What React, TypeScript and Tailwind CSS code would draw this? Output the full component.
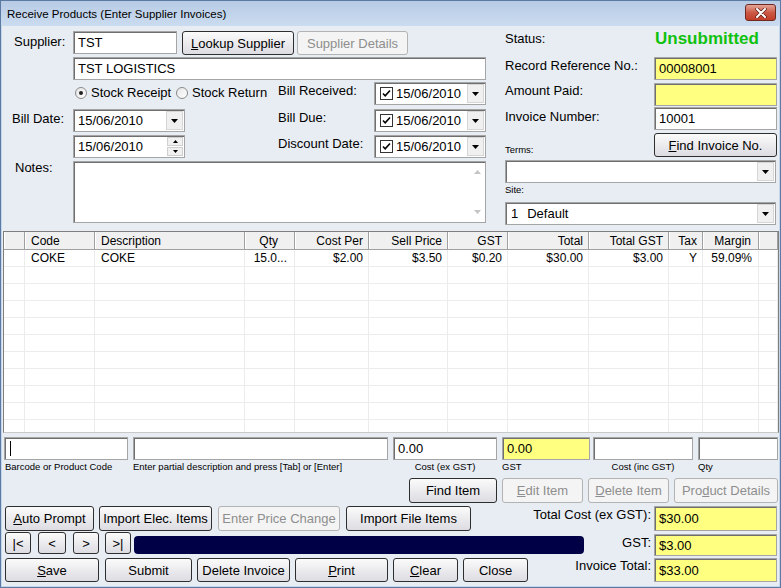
import React from 'react'

const sunken = 'border border-[#a5a5a5] shadow-[inset_1px_1px_0_#6f6f6f]'

function Field({ w, h = 'h-[23px]', yellow, children, className = '' }: { w: string; h?: string; yellow?: boolean; children?: React.ReactNode; className?: string }) {
    return (
        <div className={`${w} ${h} shrink-0 ${sunken} ${yellow ? 'bg-[#ffff80]' : 'bg-white'} flex items-center pl-[4px] text-[13px] leading-[15px] text-black whitespace-nowrap overflow-hidden ${className}`}>
            {children}
        </div>
    )
}

function Btn({ w, h = 'h-[24px]', disabled, children }: { w: string; h?: string; disabled?: boolean; children: React.ReactNode }) {
    return (
        <div
            className={`${w} ${h} shrink-0 flex items-center justify-center rounded-[3px] border text-[13px] leading-[15px] whitespace-nowrap ${
                disabled
                    ? 'border-[#b3b3b3] text-[#8e8e8e] bg-[#f4f4f4]'
                    : 'border-[#2e2e2e] text-black bg-gradient-to-b from-[#fbfbfb] to-[#dcdce2]'
            }`}
        >
            {children}
        </div>
    )
}

function Arrow({ up, color = '#000' }: { up?: boolean; color?: string }) {
    return (
        <svg width="7" height="4" viewBox="0 0 7 4">
            <path d={up ? 'M0 4h7L3.5 0z' : 'M0 0h7L3.5 4z'} fill={color} />
        </svg>
    )
}

function DropBtn() {
    return (
        <div className="ml-auto mr-[1px] w-[17px] h-[19px] shrink-0 bg-[#f0f0f0] border border-[#d6d6d6] flex items-center justify-center">
            <Arrow />
        </div>
    )
}

function Check() {
    return (
        <div className="w-[13px] h-[13px] shrink-0 border border-[#333] bg-white flex items-center justify-center">
            <svg width="9" height="9" viewBox="0 0 9 9">
                <path d="M1 4.5l2.2 2.3L8 1.5" stroke="#000" strokeWidth="1.6" fill="none" />
            </svg>
        </div>
    )
}

function DatePick() {
    return (
        <Field w="w-[112px]" className="pl-[5px]">
            <Check />
            <span className="ml-[3px]">15/06/2010</span>
            <DropBtn />
        </Field>
    )
}

function Radio({ on }: { on?: boolean }) {
    return (
        <div className="w-[12px] h-[12px] rounded-full border border-[#8a8a8a] bg-gradient-to-br from-[#e6e6e6] to-white flex items-center justify-center shrink-0">
            {on && <div className="w-[4px] h-[4px] rounded-full bg-[#222]" />}
        </div>
    )
}

const cols = 'grid grid-cols-[21px_70px_150px_50px_74px_79px_60px_81px_80px_34px_56px_1fr]'

const headers: [string, string][] = [
    ['', ''],
    ['Code', 'text-left pl-[6px]'],
    ['Description', 'text-left pl-[6px]'],
    ['Qty', 'text-right pr-[16px]'],
    ['Cost Per', 'text-right pr-[5px]'],
    ['Sell Price', 'text-right pr-[5px]'],
    ['GST', 'text-right pr-[5px]'],
    ['Total', 'text-right pr-[5px]'],
    ['Total GST', 'text-right pr-[5px]'],
    ['Tax', 'text-right pr-[5px]'],
    ['Margin', 'text-right pr-[7px]'],
    ['', ''],
]

const row = ['', 'COKE', 'COKE', '15.0...', '$2.00', '$3.50', '$0.20', '$30.00', '$3.00', 'Y', '59.09%', '']

export default function App() {
    return (
        <div className="w-[781px] h-[588px] border border-[#5b7aa3] bg-[#c4d6ec] flex flex-col font-['Liberation_Sans',Arial,sans-serif] text-black overflow-hidden">
            {/* Title bar */}
            <div className="h-[25px] shrink-0 flex items-center bg-gradient-to-b from-[#b7cbe5] to-[#cbdcf0] pl-[6px] pr-[4px]">
                <span className="text-[11.5px] leading-[14px]">Receive Products (Enter Supplier Invoices)</span>
                <div className="ml-auto -mt-[2px] w-[31px] h-[17px] rounded-[3px] border border-[#6e2a20] bg-gradient-to-b from-[#e3a497] via-[#cc5a46] to-[#c23d27] flex items-center justify-center">
                    <svg width="12" height="10" viewBox="0 0 12 10">
                        <path d="M2 1l8 8M10 1l-8 8" stroke="#5a1a12" strokeWidth="3.4" strokeLinecap="round" />
                        <path d="M2 1l8 8M10 1l-8 8" stroke="#fff" strokeWidth="2" strokeLinecap="round" />
                    </svg>
                </div>
            </div>

            {/* Body */}
            <div className="mx-[1px] h-[560px] bg-[#e8edf3] flex flex-col">
                {/* Top section */}
                <div className="pt-[5px] flex">
                    {/* Left column */}
                    <div className="ml-[2px] w-[482px] flex flex-col text-[13px] leading-[15px]">
                        <div className="flex h-[24px]">
                            <div className="w-[69px] pl-[10px] pt-[3px]">Supplier:</div>
                            <Field w="w-[104px]">TST</Field>
                            <div className="ml-[5px]">
                                <Btn w="w-[112px]"><span><u>L</u>ookup Supplier</span></Btn>
                            </div>
                            <div className="ml-[3px]">
                                <Btn w="w-[111px]" disabled>Supplier Details</Btn>
                            </div>
                        </div>
                        <div className="flex mt-[2px]">
                            <div className="w-[69px]" />
                            <Field w="w-[413px]">TST LOGISTICS</Field>
                        </div>
                        <div className="flex mt-[2px] h-[23px]">
                            <div className="w-[69px]" />
                            <div className="w-[205px] flex items-center pl-[2px] -mt-[2px]">
                                <div className="w-[101px] flex items-center gap-[4px]">
                                    <Radio on />
                                    <span>Stock Receipt</span>
                                </div>
                                <div className="flex items-center gap-[4px]">
                                    <Radio />
                                    <span>Stock Return</span>
                                </div>
                            </div>
                            <div className="w-[96px] pt-[1px]">Bill Received:</div>
                            <DatePick />
                        </div>
                        <div className="flex mt-[4px] h-[23px]">
                            <div className="w-[69px] pl-[8px] pt-[2px]">Bill Date:</div>
                            <Field w="w-[112px]">
                                <span>15/06/2010</span>
                                <DropBtn />
                            </Field>
                            <div className="w-[93px]" />
                            <div className="w-[96px] pt-[1px]">Bill Due:</div>
                            <DatePick />
                        </div>
                        <div className="flex mt-[3px] h-[23px]">
                            <div className="w-[69px]" />
                            <Field w="w-[112px]">
                                <span>15/06/2010</span>
                                <div className="ml-auto mr-[1px] flex flex-col gap-[1px]">
                                    <div className="w-[16px] h-[9px] bg-[#f0f0f0] border border-[#cfcfcf] flex items-center justify-center">
                                        <svg width="5" height="3" viewBox="0 0 5 3"><path d="M0 3h5L2.5 0z" fill="#000" /></svg>
                                    </div>
                                    <div className="w-[16px] h-[9px] bg-[#f0f0f0] border border-[#cfcfcf] flex items-center justify-center">
                                        <svg width="5" height="3" viewBox="0 0 5 3"><path d="M0 0h5L2.5 3z" fill="#000" /></svg>
                                    </div>
                                </div>
                            </Field>
                            <div className="w-[93px]" />
                            <div className="w-[96px] pt-[1px]">Discount Date:</div>
                            <DatePick />
                        </div>
                        <div className="flex mt-[3px]">
                            <div className="w-[69px] pl-[11px] -mt-[1px]">Notes:</div>
                            <div className={`w-[413px] h-[62px] ${sunken} bg-white flex justify-end`}>
                                <div className="w-[16px] flex flex-col items-center justify-between py-[8px]">
                                    <Arrow up color="#c4c4c4" />
                                    <Arrow color="#c4c4c4" />
                                </div>
                            </div>
                        </div>
                    </div>

                    {/* Right column */}
                    <div className="ml-[19px] w-[272px] flex flex-col text-[13px] leading-[15px]">
                        <div className="flex h-[26px] items-start">
                            <div className="w-[150px]">Status:</div>
                            <div className="-mt-[2px] text-[17px] leading-[19px] font-bold text-[#10c210]">Unsubmitted</div>
                        </div>
                        <div className="flex">
                            <div className="w-[149px] pt-[1px]">Record Reference No.:</div>
                            <Field w="w-[123px]" yellow>00008001</Field>
                        </div>
                        <div className="flex mt-[3px]">
                            <div className="w-[149px] pt-[0px]">Amount Paid:</div>
                            <Field w="w-[123px]" yellow />
                        </div>
                        <div className="flex mt-[1px]">
                            <div className="w-[149px] pt-[2px]">Invoice Number:</div>
                            <Field w="w-[123px]">10001</Field>
                        </div>
                        <div className="flex mt-[3px] h-[24px] items-end">
                            <div className="w-[149px] text-[9.5px] leading-[12px] mb-[1px]">Terms:</div>
                            <Btn w="w-[123px]"><span><u>F</u>ind Invoice No.</span></Btn>
                        </div>
                        <div className="mt-[3px]">
                            <Field w="w-[271px]">
                                <DropBtn />
                            </Field>
                        </div>
                        <div className="h-[19px] pt-[1px] text-[9.5px] leading-[12px]">Site:</div>
                        <Field w="w-[271px]" className="text-[#10104a]">
                            <span className="ml-[1px]">1</span>
                            <span className="ml-[9px]">Default</span>
                            <DropBtn />
                        </Field>
                    </div>
                </div>

                {/* Grid */}
                <div className="mt-[6px] ml-[1px] w-[776px] h-[202px] border border-[#7e7e7e] border-b-[#c8c8c8] bg-white overflow-hidden text-[12px] leading-[14px]">
                    <div className={`${cols} h-[18px] bg-[#f0f0f0] border-b border-[#a0a0a0]`}>
                        {headers.map(([h, cls], i) => (
                            <div key={i} className={`h-full border-r border-[#a0a0a0] shadow-[inset_1px_0_0_#ffffff] flex items-center ${cls.includes('text-right') ? 'justify-end' : ''} ${cls}`}>
                                {h}
                            </div>
                        ))}
                    </div>
                    {Array.from({ length: 11 }).map((_, r) => (
                        <div key={r} className={`${cols} h-[17px] border-b border-[#ececec]`}>
                            {row.map((v, i) => {
                                const cls = headers[i][1]
                                const right = cls.includes('text-right')
                                return (
                                    <div key={i} className={`h-full border-r border-[#ececec] flex items-center ${right ? 'justify-end pr-[5px]' : 'pl-[6px]'} ${i === 3 ? 'pr-[7px]' : ''} ${i === 10 ? 'pr-[6px]' : ''}`}>
                                        {r === 0 ? v : ''}
                                    </div>
                                )
                            })}
                        </div>
                    ))}
                </div>

                {/* Item entry */}
                <div className="mt-[4px] ml-[2px] flex text-[13px] leading-[15px]">
                    <div className="flex flex-col w-[124px]">
                        <Field w="w-[124px]">
                            <div className="w-[1px] h-[15px] bg-black ml-[1px]" />
                        </Field>
                        <div className="mt-[1px] text-[9.5px] leading-[12px] pl-[1px] whitespace-nowrap">Barcode or Product Code</div>
                    </div>
                    <div className="flex flex-col w-[255px] ml-[5px]">
                        <Field w="w-[255px]" />
                        <div className="mt-[1px] text-[9.5px] leading-[12px] whitespace-nowrap">Enter partial description and press [Tab] or [Enter]</div>
                    </div>
                    <div className="flex flex-col w-[104px] ml-[5px]">
                        <Field w="w-[104px]">0.00</Field>
                        <div className="mt-[1px] text-[9.5px] leading-[12px] text-center">Cost (ex GST)</div>
                    </div>
                    <div className="flex flex-col w-[88px] ml-[5px]">
                        <Field w="w-[88px]" yellow>0.00</Field>
                        <div className="mt-[1px] text-[9.5px] leading-[12px]">GST</div>
                    </div>
                    <div className="flex flex-col w-[100px] ml-[3px]">
                        <Field w="w-[100px]" />
                        <div className="mt-[1px] text-[9.5px] leading-[12px] text-center">Cost (inc GST)</div>
                    </div>
                    <div className="flex flex-col w-[80px] ml-[5px]">
                        <Field w="w-[80px]" />
                        <div className="mt-[1px] text-[9.5px] leading-[12px]">Qty</div>
                    </div>
                </div>

                <div className="mt-[5px] flex justify-end gap-[5px] pr-[1px]">
                    <Btn w="w-[88px]" h="h-[25px]">Find Item</Btn>
                    <Btn w="w-[81px]" h="h-[25px]" disabled><span><u>E</u>dit Item</span></Btn>
                    <Btn w="w-[81px]" h="h-[25px]" disabled><span><u>D</u>elete Item</span></Btn>
                    <Btn w="w-[104px]" h="h-[25px]" disabled><span>Pro<u>d</u>uct Details</span></Btn>
                </div>

                {/* Bottom area */}
                <div className="mt-[3px] flex text-[13px] leading-[15px]">
                    <div className="ml-[3px] w-[579px] shrink-0 flex flex-col">
                        <div className="flex h-[25px]">
                            <Btn w="w-[89px]" h="h-[25px]"><span><u>A</u>uto Prompt</span></Btn>
                            <div className="ml-[5px]"><Btn w="w-[113px]" h="h-[25px]">Import Elec. Items</Btn></div>
                            <div className="ml-[6px]"><Btn w="w-[122px]" h="h-[25px]" disabled>Enter Price Change</Btn></div>
                            <div className="ml-[6px]"><Btn w="w-[125px]" h="h-[25px]">Import File Items</Btn></div>
                        </div>
                        <div className="flex mt-[1px] h-[22px] items-center">
                            <Btn w="w-[26px]" h="h-[22px]">|&lt;</Btn>
                            <div className="ml-[7px]"><Btn w="w-[28px]" h="h-[22px]">&lt;</Btn></div>
                            <div className="ml-[7px]"><Btn w="w-[26px]" h="h-[22px]">&gt;</Btn></div>
                            <div className="ml-[6px]"><Btn w="w-[26px]" h="h-[22px]">&gt;|</Btn></div>
                            <div className="ml-[3px] w-[450px] h-[18px] mt-[3px] rounded-[4px] bg-[#000046]" />
                        </div>
                        <div className="flex mt-[4px]">
                            <Btn w="w-[94px]"><span><u>S</u>ave</span></Btn>
                            <div className="ml-[6px]"><Btn w="w-[87px]">Submit</Btn></div>
                            <div className="ml-[5px]"><Btn w="w-[93px]">Delete Invoice</Btn></div>
                            <div className="ml-[5px]"><Btn w="w-[93px]"><span><u>P</u>rint</span></Btn></div>
                            <div className="ml-[5px]"><Btn w="w-[65px]"><span><u>C</u>lear</span></Btn></div>
                            <div className="ml-[5px]"><Btn w="w-[65px]">Close</Btn></div>
                        </div>
                    </div>
                    <div className="w-[195px] shrink-0 flex flex-col">
                        <div className="flex h-[25px]">
                            <div className="w-[70px] flex justify-end pr-[3px] pt-[1px] whitespace-nowrap">Total Cost (ex GST):</div>
                            <Field w="w-[123px]" h="h-[25px]" yellow>$30.00</Field>
                        </div>
                        <div className="flex h-[22px] mt-[3px]">
                            <div className="w-[70px] flex justify-end pr-[3px] pt-[1px] whitespace-nowrap">GST:</div>
                            <Field w="w-[123px]" h="h-[22px]" yellow>$3.00</Field>
                        </div>
                        <div className="flex h-[24px] mt-[2px]">
                            <div className="w-[70px] flex justify-end pr-[3px] whitespace-nowrap">Invoice Total:</div>
                            <Field w="w-[123px]" h="h-[24px]" yellow>$33.00</Field>
                        </div>
                    </div>
                </div>
            </div>
        </div>
    )
}
